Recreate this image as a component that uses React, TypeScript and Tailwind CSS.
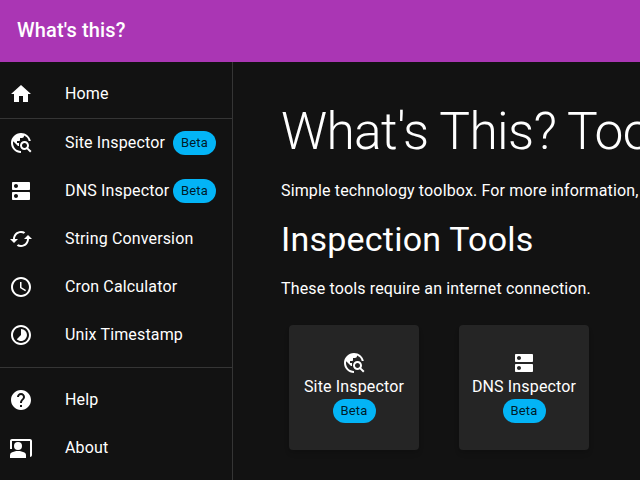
import React from "react";
import {
  MdHome,
  MdTravelExplore,
  MdDns,
  MdCached,
  MdSchedule,
  MdTimelapse,
  MdHelp,
  MdCoPresent,
} from "react-icons/md";
import type { IconType } from "react-icons";

function Beta() {
  return (
    <span className="flex h-6 w-[43px] items-center justify-center rounded-full bg-[#03b4f6] text-[13px] tracking-[0.14px] text-black/87">
      Beta
    </span>
  );
}

function NavItem({ icon: Icon, label, beta }: { icon: IconType; label: string; beta?: boolean }) {
  return (
    <div className="flex h-12 items-center pl-[9px]">
      <Icon className="mr-8 h-6 w-6 shrink-0" />
      <span className="whitespace-nowrap text-base tracking-[0.15px]">{label}</span>
      {beta && (
        <span className="ml-auto mr-4">
          <Beta />
        </span>
      )}
    </div>
  );
}

function ToolCard({ icon: Icon, label }: { icon: IconType; label: string }) {
  return (
    <div className="flex h-[125px] w-[130px] shrink-0 flex-col items-center rounded bg-[#252525] pt-[26px] shadow-md">
      <Icon className="h-6 w-6" />
      <span className="whitespace-nowrap text-base leading-6 tracking-[0.15px]">{label}</span>
      <Beta />
    </div>
  );
}

export default function App() {
  return (
    <div className="flex h-[480px] w-[640px] flex-col overflow-hidden bg-[#121212] font-['Roboto',sans-serif] text-white">
      <header className="flex h-[62px] shrink-0 items-center bg-[#aa36b4] pb-0.5 pl-[17px] text-xl font-medium tracking-[0.15px]">
        What's this?
      </header>
      <div className="flex min-h-0 flex-1">
        <nav className="w-[233px] shrink-0 border-r border-[#353535]">
          <div className="border-b border-[#353535] pt-2">
            <NavItem icon={MdHome} label="Home" />
          </div>
          <NavItem icon={MdTravelExplore} label="Site Inspector" beta />
          <NavItem icon={MdDns} label="DNS Inspector" beta />
          <NavItem icon={MdCached} label="String Conversion" />
          <NavItem icon={MdSchedule} label="Cron Calculator" />
          <NavItem icon={MdTimelapse} label="Unix Timestamp" />
          <div className="mt-2 border-t border-[#353535] pt-2">
            <NavItem icon={MdHelp} label="Help" />
            <NavItem icon={MdCoPresent} label="About" />
          </div>
        </nav>
        <main className="min-w-0 flex-1 overflow-hidden whitespace-nowrap pl-12 pt-[39px]">
          <h1 className="text-[51.5px] font-light leading-[62px] tracking-[-0.67px]">What's This? Toolbox</h1>
          <p className="mt-4 text-base leading-6 tracking-[0.15px]">
            Simple technology toolbox. For more information, see the help page.
          </p>
          <h2 className="mt-[15px] text-[34px] leading-[42px] tracking-[0.22px]">Inspection Tools</h2>
          <p className="mt-[17px] text-base leading-6 tracking-[0.15px]">These tools require an internet connection.</p>
          <div className="mt-6 flex gap-10 pl-2">
            <ToolCard icon={MdTravelExplore} label="Site Inspector" />
            <ToolCard icon={MdDns} label="DNS Inspector" />
          </div>
        </main>
      </div>
    </div>
  );
}
